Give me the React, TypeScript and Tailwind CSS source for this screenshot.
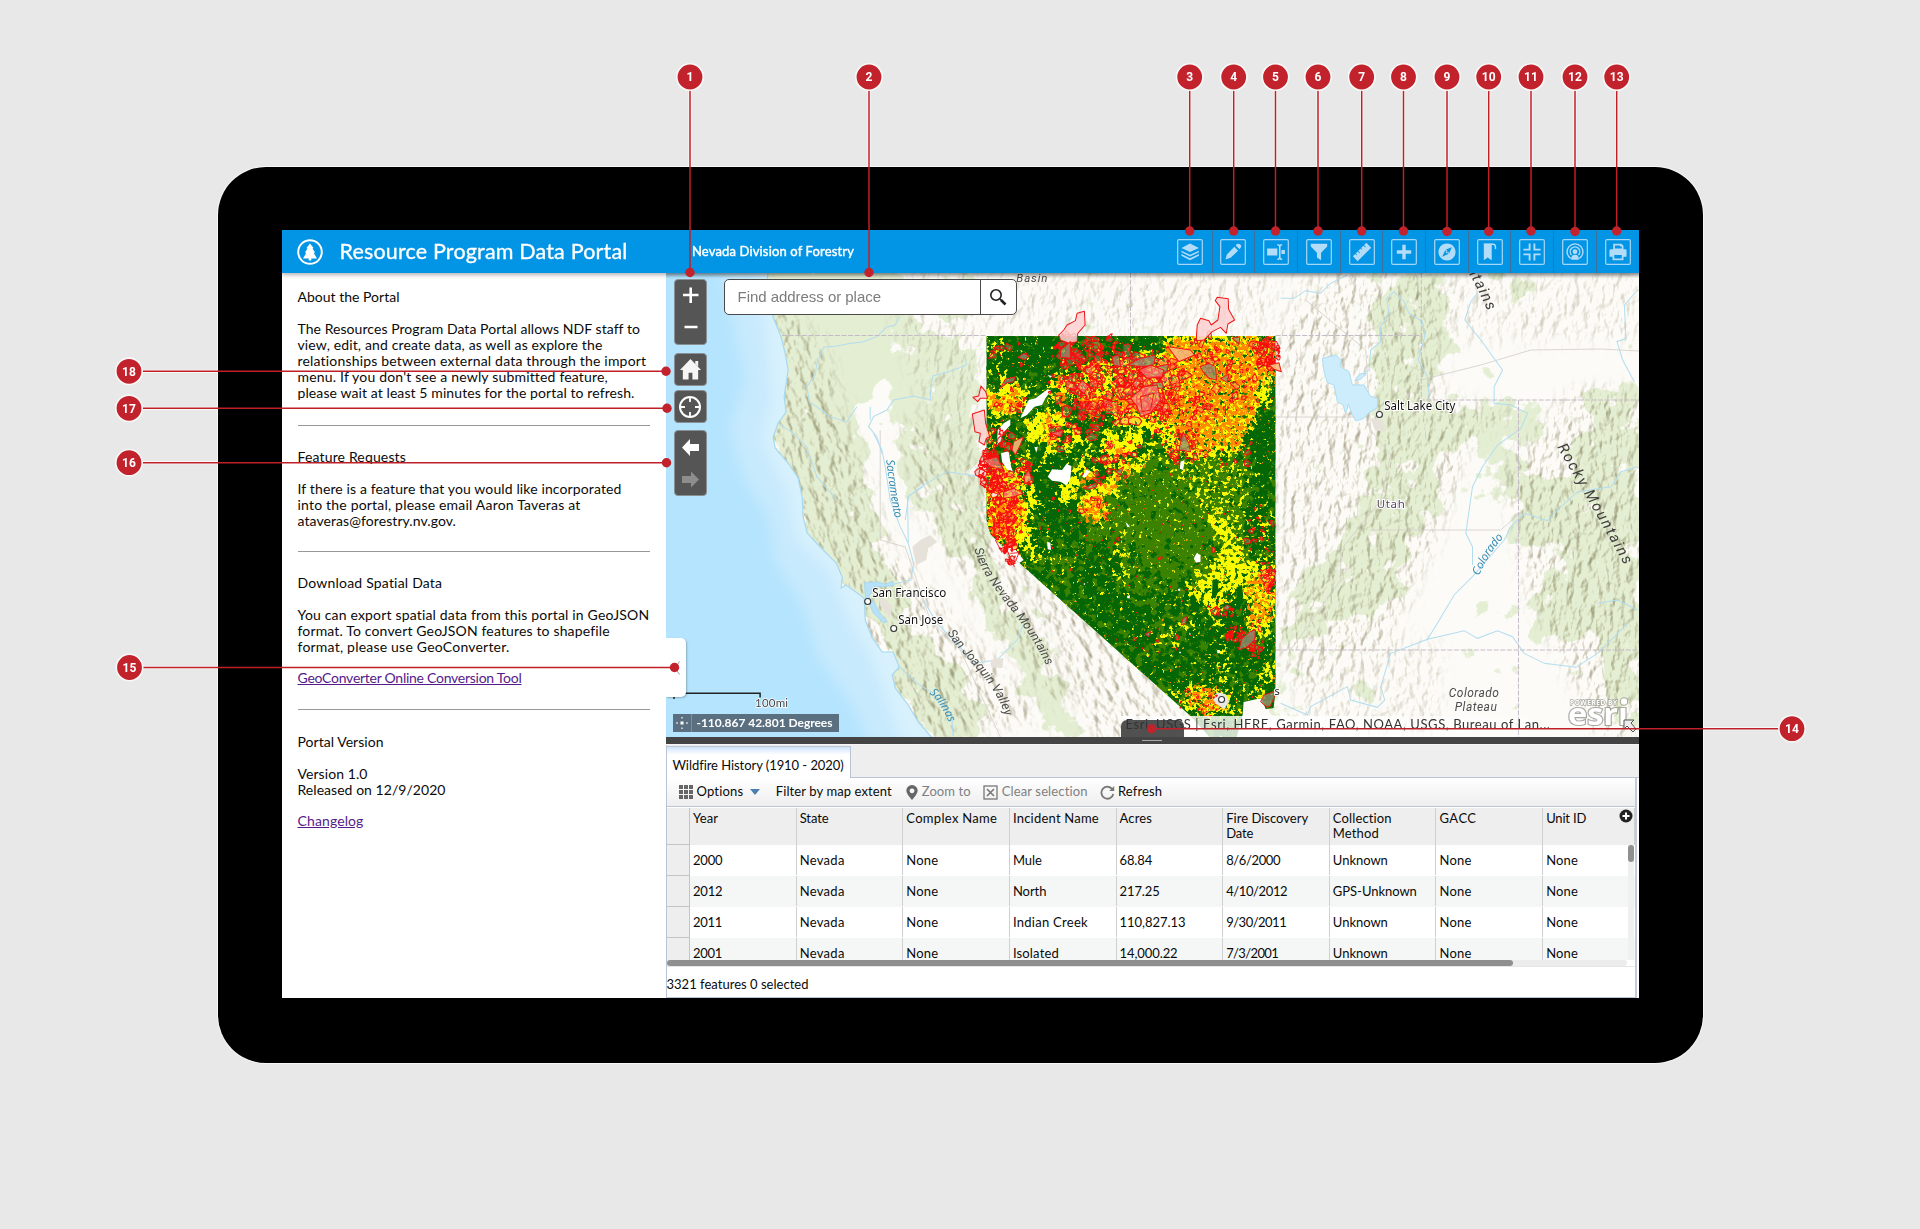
import React, { useLayoutEffect, useRef, useState } from 'react';

/* Inline text whose tracking is tuned so that it fills a given width. */
function Fit({ w, className = '', children }: { w: number; className?: string; children: string }) {
  const ref = useRef<HTMLSpanElement>(null);
  const [ls, setLs] = useState(0);
  useLayoutEffect(() => {
    if (ref.current) setLs((w - ref.current.getBoundingClientRect().width) / children.length);
  }, []);
  return (
    <span ref={ref} className={'inline-block whitespace-nowrap ' + className} style={{ letterSpacing: ls }}>
      {children}
    </span>
  );
}

function rng(seed: number) {
  let s = seed;
  return () => {
    s = (s * 1664525 + 1013904223) % 4294967296;
    return s / 4294967296;
  };
}

/* cx, cy, rx, ry, count, size */
const clusters = [
  [1105, 385, 58, 38, 90, 6],
  [1140, 400, 34, 28, 46, 9],
  [1150, 372, 34, 14, 26, 8],
  [1065, 350, 14, 18, 34, 6],
  [1100, 352, 22, 18, 34, 5],
  [1082, 385, 14, 30, 36, 5],
  [1085, 420, 20, 20, 30, 5],
  [1175, 420, 26, 36, 60, 5],
  [1210, 385, 30, 36, 34, 4],
  [1245, 385, 20, 26, 20, 4],
  [1265, 352, 14, 16, 46, 6],
  [1205, 350, 26, 16, 18, 5],
  [990, 470, 11, 22, 60, 6],
  [1003, 505, 16, 22, 56, 4],
  [1005, 535, 12, 17, 36, 4],
  [1010, 553, 6, 10, 14, 4],
  [1018, 475, 14, 16, 20, 5],
  [1000, 440, 14, 14, 20, 4],
  [1010, 400, 16, 14, 18, 3],
  [1105, 468, 14, 16, 16, 5],
  [1120, 450, 26, 12, 16, 3],
  [1060, 435, 14, 18, 16, 5],
  [1235, 455, 30, 14, 14, 3],
  [1190, 455, 20, 10, 18, 4],
  [1268, 575, 8, 16, 26, 4],
  [1235, 634, 8, 8, 16, 5],
  [1256, 640, 8, 22, 20, 4],
  [1222, 610, 16, 8, 12, 4],
  [1260, 540, 14, 40, 16, 3],
  [1080, 510, 30, 12, 10, 4],
  [1160, 645, 30, 12, 8, 3],
  [1200, 700, 26, 12, 14, 3],
  [1010, 355, 20, 14, 8, 4],
  [1130, 520, 130, 60, 24, 2],
];
const rand = rng(77);
const firePaths = clusters.map(([cx, cy, rx, ry, n, size]) => {
  let d = '';
  for (let i = 0; i < n; i++) {
    const a = rand() * 6.283;
    const r = Math.sqrt(rand());
    const x = cx + Math.cos(a) * r * rx;
    const y = cy + Math.sin(a) * r * ry;
    const s = size * (0.2 + rand() * rand() * 1.3);
    const k = 7 + Math.floor(rand() * 5);
    const stretch = 0.5 + rand() * 0.5;
    const tilt = rand() * 3.14;
    for (let j = 0; j < k; j++) {
      const t = (j / k) * 6.283;
      const q = s * (0.5 + rand() * 0.7);
      const px = Math.cos(t) * q;
      const py = Math.sin(t) * q * stretch;
      d +=
        (j ? 'L' : 'M') +
        (x + px * Math.cos(tilt) - py * Math.sin(tilt)).toFixed(1) +
        ' ' +
        (y + px * Math.sin(tilt) + py * Math.cos(tilt)).toFixed(1);
    }
    d += 'Z';
  }
  return d;
});

const NW = 'translate(960 270) scale(.33333)';
const SW = 'translate(960 500) scale(.33333)';
const EAST = 'translate(1280 270) scale(.33333)';
const COAST = 'translate(670 400) scale(.33333)';
const NCOAST = 'translate(660 220) scale(.33333)';

function Speckle({ id, seed, color, freq = 0.26 }: { id: string; seed: number; color: string; freq?: number }) {
  return (
    <filter id={id} x="950" y="300" width="360" height="450" filterUnits="userSpaceOnUse" colorInterpolationFilters="sRGB">
      <feTurbulence type="fractalNoise" baseFrequency="0.07" numOctaves="3" seed={seed + 9} result="w" />
      <feDisplacementMap in="SourceAlpha" in2="w" scale="34" xChannelSelector="R" yChannelSelector="G" />
      <feGaussianBlur stdDeviation="2" result="d" />
      <feTurbulence type="fractalNoise" baseFrequency={freq} numOctaves="3" seed={seed} />
      <feColorMatrix values="0 0 0 0 0  0 0 0 0 0  0 0 0 0 0  1 0 0 0 0" result="n" />
      <feComposite in="n" in2="d" operator="arithmetic" k1="0" k2="1" k3="0.6" k4="-0.3" />
      <feComponentTransfer result="m">
        <feFuncA type="linear" slope="11" intercept="-5" />
      </feComponentTransfer>
      <feFlood floodColor={color} />
      <feComposite in2="m" operator="in" />
    </filter>
  );
}

function MapCanvas() {
  return (
    <svg viewBox="666 273 972 464" className="absolute inset-0 h-full w-full" preserveAspectRatio="none">
      <defs>
        <Speckle id="midgreen" seed={3} color="#3a8200" freq={0.14} />
        <Speckle id="yellow" seed={12} color="#fafa00" />
        <Speckle id="orange" seed={25} color="#ff8c00" />
        <Speckle id="darkgreen" seed={38} color="#056605" freq={0.14} />
        <Speckle id="redpix" seed={51} color="#ff1a0a" />
        <filter id="veg" x="660" y="260" width="990" height="490" filterUnits="userSpaceOnUse" colorInterpolationFilters="sRGB">
          <feTurbulence type="fractalNoise" baseFrequency="0.05" numOctaves="5" seed="8" result="t" />
          <feDisplacementMap in="SourceAlpha" in2="t" scale="40" xChannelSelector="R" yChannelSelector="G" />
          <feGaussianBlur stdDeviation="4" result="d" />
          <feColorMatrix in="t" values="0 0 0 0 0  0 0 0 0 0  0 0 0 0 0  0 0 1 0 0" result="n" />
          <feComposite in="n" in2="d" operator="arithmetic" k2="1" k3="0.7" k4="-0.3" />
          <feComponentTransfer result="m">
            <feFuncA type="linear" slope="14" intercept="-6.5" />
          </feComponentTransfer>
          <feFlood floodColor="#e4eed3" />
          <feComposite in2="m" operator="in" />
        </filter>
        <filter id="relief" x="560" y="160" width="1200" height="700" filterUnits="userSpaceOnUse" colorInterpolationFilters="sRGB">
          <feTurbulence type="fractalNoise" baseFrequency="0.13 0.07" numOctaves="3" seed="5" />
          <feColorMatrix values="0 0 0 0 0  0 0 0 0 0  0 0 0 0 0  1 0 0 0 0" />
          <feDiffuseLighting surfaceScale="4.2" lightingColor="#ffffff" diffuseConstant="1.25">
            <feDistantLight azimuth="215" elevation="55" />
          </feDiffuseLighting>
          <feComponentTransfer result="l">
            <feFuncR type="linear" slope="0.38" intercept="0.635" />
            <feFuncG type="linear" slope="0.4" intercept="0.61" />
            <feFuncB type="linear" slope="0.48" intercept="0.52" />
          </feComponentTransfer>
          <feGaussianBlur in="SourceAlpha" stdDeviation="9" result="d" />
          <feComposite in="l" in2="d" operator="in" />
        </filter>
        <filter id="soft" x="-20%" y="-20%" width="140%" height="140%">
          <feGaussianBlur stdDeviation="7" />
        </filter>
        <clipPath id="state">
          <path d="M986 336H1275V690L1273 708L1265 709L1261 698L1243 702L1242 715L1236 737H1209L1190 716L1018 562L990 534L986 520Z" />
        </clipPath>
        <clipPath id="land">
          <path d="M768 273L766 290L773 317L781 337L785 353L788 370L784 397L786 412L778 423L773 437L775 448L788 463L798 478L802 497L803 517L807 533L820 547L836 563L842 577L841 588L846 585L864 598L865 620L872 638L882 652L893 652L899 667L892 675L895 688L908 705L918 722L932 738H1640V272Z" />
        </clipPath>
        <path id="p-rocky" d="M1556 447Q1592 508 1625 568" />
        <path id="p-sierra" d="M974 549C985 590 1022 612 1047 668" />
        <path id="p-joaquin" d="M947 633C963 658 996 682 1005 718" />
        <path id="p-sac" d="M886 460Q889 490 895 520" />
        <path id="p-salinas" d="M929 693Q941 703 949 724" />
        <path id="p-colo" d="M1478 576Q1488 553 1504 536" />
        <path id="p-tains" d="M1466 270Q1478 290 1488 314" />
      </defs>

      {/* ocean */}
      <rect x="666" y="273" width="972" height="464" fill="#b5e4fe" />
      <path filter="url(#soft)" d="M720 260L735 330L745 380L730 430L745 480L770 520L775 560L805 610L820 660L850 700L870 745H960V260Z" fill="#c8eafd" />
      <path filter="url(#soft)" d="M756 260L767 340L772 400L762 440L787 490L797 540L830 570L850 620L873 660L903 745H960V260Z" fill="#d8f1fd" />

      {/* land */}
      <g clipPath="url(#land)">
        <rect x="666" y="273" width="972" height="464" fill="#fcfbf7" />
        <g filter="url(#veg)">
          <path fillOpacity="0.95" d="M760 260H890L920 300L890 340L875 400L855 420L868 480L885 560L905 600L895 640L860 620L820 560L780 470Z" />
          <path fillOpacity="0.7" d="M880 330L960 340L975 400L985 520L1000 580L1050 640L1080 737H1050L1000 650L960 560L910 500L890 440Z" />
          <path fillOpacity="0.8" d="M885 600L930 640L970 690L985 737H930L890 680Z" />
          <path fillOpacity="0.7" d="M1375 273H1450V350L1430 400H1530L1550 440L1470 440L1430 460L1440 500L1400 560L1400 600L1350 620L1300 640L1290 590L1340 540L1370 460Z" />
          <path fillOpacity="0.75" d="M1600 380H1640V740H1620L1600 640L1530 640L1525 600L1570 560L1510 540L1520 480L1560 470Z" />
          <path fillOpacity="0.5" d="M1470 600L1500 590L1505 610L1475 615ZM1340 680L1370 660L1380 710L1360 700ZM1480 440L1540 440L1500 510L1475 520ZM1480 273H1530L1540 300L1520 300ZM1500 660L1530 737H1520Z" />
          <path fillOpacity="0.3" d="M900 273H985V520L950 450L900 330ZM1275 620L1300 600L1340 660L1300 737H1275Z" />
        </g>
        <g style={{ mixBlendMode: 'multiply' }}>
          <g filter="url(#relief)" transform="rotate(-24 900 520)">
            <path fillOpacity="1" d="M860 200L900 330L890 440L880 540L950 760L830 730L790 520L740 260ZM940 430L985 440L1000 560L1010 700L1000 770L960 740L920 520Z" />
          </g>
          <g filter="url(#relief)" transform="rotate(-30 1100 640)">
            <path fillOpacity="1" d="M1070 500L1110 500L1130 640L1130 800H1040L1050 640Z" />
          </g>
          <g filter="url(#relief)">
            <path fillOpacity="0.85" d="M1340 273H1440V400L1520 410L1470 440L1440 530L1390 640L1300 700L1275 640V336Z" />
            <path fillOpacity="0.9" d="M1570 390H1640V737H1600L1530 600L1500 470Z" />
            <path fillOpacity="0.5" d="M880 273H1275V336H985V540L920 400ZM1290 273H1350V340H1290ZM1440 273H1640V340H1440ZM1340 640H1440V737H1280Z" />
          </g>
        </g>
        <g fill="none" stroke="#d2cdc9" strokeWidth="0.8">
          <path d="M880 430V540L905 547L930 620L960 650L1000 737M1275 417H1360M1420 380L1480 365L1530 350L1600 349L1638 351M1305 300L1365 350L1370 430L1390 455L1380 500L1340 550L1340 580L1290 650M1370 530L1460 530L1500 530L1520 512" />
        </g>
        {/* rivers */}
        <g fill="none" stroke="#b2ddf0" strokeWidth="1">
          <path transform={NCOAST} strokeWidth="3" d="M718 290L705 315L680 320L650 350L610 365L560 372L530 378L490 382L470 430L465 465L440 500L448 545L510 590L560 605L590 560M915 405L918 435L880 450L850 460L818 468L812 500L810 540L760 528L700 540L680 570L640 590L625 620L650 650L665 700M355 610L400 640L440 680L470 770L530 840M960 770L860 755L790 795L745 830L735 900M630 600V560" />
          <path transform={COAST} strokeWidth="3" d="M610 100L635 150L645 200L660 300L690 380L714 430L712 290L760 260M714 430L730 490L722 540L660 555M760 600L800 670L860 730L910 790L980 780L1040 720L1060 670M688 800L740 850L790 880L845 950L848 1008M930 325L960 315" />
          <path transform={EAST} strokeWidth="3" d="M0 85L40 85L75 62L120 70L150 40L200 15M230 320L265 300L270 240L300 215L300 170L325 130L318 85L340 65L370 95L385 130L425 155L432 200L412 270L440 320L445 385M590 70L570 95L552 150L600 210L665 300L640 350L640 400L690 405L740 430L720 475L650 525L605 590L575 650L555 790L575 830V885M1070 60L1030 105L1035 205L1008 215L1025 270L1060 335M1070 590L1020 605L990 650L890 665L830 720L800 752L730 730L690 770L670 810L575 920L520 975L470 1060L440 1108L330 1150L300 1250L312 1290L290 1312L210 1290L200 1250L90 1310L80 1335L0 1300M440 1108L550 1082L590 1105L650 1082L695 1100L730 1150L790 1180L885 1192L950 1150L1000 1100L1040 1060M1070 1020L1010 990L950 1000" />
        </g>
        <g transform={EAST} fill="#cdedfd" stroke="#a4d8f0" strokeWidth="2.5">
          <path d="M125 265L165 255L182 270L178 290L205 305L215 345L250 345L268 378L290 385L290 413L262 430L250 445L225 453L213 430L203 402L195 432L187 405L170 395L160 345L140 338L130 305Z" />
          <path d="M222 332L238 312L256 310L240 328Z" />
        </g>
        <g transform={COAST} fill="#b6e1f8" stroke="#9dd2ec" strokeWidth="2">
          <path d="M583 548L620 545L645 552L668 545L672 556L640 560L612 560L606 575L595 590L612 608L630 640L652 665L640 668L610 640L596 610L585 590Z" />
        </g>
        <path fill="#e6e1d9" d="M912 547L920 540L930 535L937 542L928 548L926 560L916 565ZM1370 418L1382 420L1384 432L1374 430ZM990 660L1003 658L1002 668L991 667ZM878 594L892 606L890 618L880 606Z" />
      </g>
      <path d="M768 273L766 290L773 317L781 337L785 353L788 370L784 397L786 412L778 423L773 437L775 448L788 463L798 478L802 497L803 517L807 533L820 547L836 563L842 577L841 588L846 585L864 598L865 620L872 638L882 652L893 652L899 667L892 675L895 688L908 705L918 722L932 738" fill="none" stroke="#a5d9f2" strokeWidth="1.2" />
      <path d="M782 335.5H986M1275 335.5H1420M1130 273V336M1420.5 273V400H1638M1517.6 400V737M1275 650H1638" fill="none" stroke="#c5bac8" strokeWidth="1" strokeDasharray="5 1.6" />

      {/* cover raster */}
      <g clipPath="url(#state)">
        <rect x="950" y="300" width="350" height="440" fill="#056605" />
        <g filter="url(#midgreen)">
          <rect x="940" y="290" width="380" height="460" fillOpacity="0.38" />
          <path transform={NW} fillOpacity="0.5" d="M430 640L580 540L640 560H850L870 800L860 900L720 950L600 900L520 820L380 800Z" />
          <path transform={SW} fillOpacity="0.3" d="M480 60L740 20L700 220L560 320L480 260ZM180 180L300 150L380 220L300 230ZM560 380L760 380L740 540L600 500Z" />
        </g>
        <g filter="url(#darkgreen)">
          <path transform={NW} fillOpacity="0.72" d="M80 230L100 200H300L320 270L230 320L90 340ZM430 200H630L570 240L480 260ZM200 600L250 560L340 590L300 760L210 720ZM880 470L945 430V560L920 700L900 780H870ZM100 470L140 450L120 540Z" />
          <path transform={SW} fillOpacity="0.55" d="M340 250L470 170L480 340L600 290L560 420L480 420ZM600 180L680 150L650 220ZM780 340L860 360L830 480L780 560H620L560 500ZM870 80H940V180L880 170ZM900 400H945V560H890Z" />
        </g>
        <g filter="url(#yellow)">
          <rect x="940" y="290" width="380" height="460" fillOpacity="0.13" />
          <path transform={NW} fillOpacity="0.58" d="M630 190H945V300L905 430L860 480L835 555L620 560L600 440L440 390L330 400L350 290L480 280L600 240Z" />
          <path transform={NW} fillOpacity="0.72" d="M75 360L130 340L200 330L205 400L190 440L110 440L75 550ZM270 380L290 310L320 290L325 350L310 400ZM190 470L250 420L300 400L310 450L250 520L200 510ZM180 540L210 530L200 590L175 580ZM240 580L260 510L300 520L260 590ZM310 690L330 620L370 570L390 480L400 520L395 580L350 640L330 690ZM350 690L400 650L500 580L580 545L570 580L500 630L420 700L420 750L360 750ZM420 590L430 490L520 490L560 480L560 520L490 570ZM400 400L600 440L600 500L520 470L440 440ZM80 600H200L210 800H80ZM330 400L350 520L340 560L320 520Z" />
          <path transform={NW} fillOpacity="0.25" d="M100 200L130 190L120 300L80 330V200ZM600 560H860V760L760 780L660 640ZM890 690H930V900H890ZM470 740L500 720L480 950ZM780 700H860V900H770Z" />
          <path transform={SW} fillOpacity="0.58" d="M740 80L790 20L820 120L860 190L945 180V390L880 400L850 300L800 290L770 390L740 330L690 310L670 270L720 210L790 150ZM640 555L770 560L850 640L690 640ZM700 360L640 420L600 420L680 350Z" />
          <path transform={SW} fillOpacity="0.44" d="M80 0H230L210 100L280 190H190L90 110ZM480 150H500V250H480ZM780 420H800V540H770ZM840 560H910V600H860ZM910 470H945V540H910ZM240 160L280 160L290 200Z" />
        </g>
        <g filter="url(#orange)">
          <path transform={NW} fillOpacity="0.56" d="M640 200H945V300L900 400L830 550L700 540L640 480L600 400L620 300L590 260ZM80 360L200 340L190 430L90 440ZM280 310H320L310 400H280ZM260 420H310L260 560L250 520ZM320 690L380 580L390 640L340 690ZM360 680L420 660L500 590L570 560L500 640L430 690L415 750L370 750ZM440 540L490 520L480 570ZM340 350L600 400L580 440L350 430Z" />
          <path transform={NW} fillOpacity="0.38" d="M80 600H190L190 790H90Z" />
          <path transform={SW} fillOpacity="0.48" d="M860 220L940 230V380L860 370ZM650 570L760 560L830 630L720 640ZM100 0H170L150 150L100 90ZM760 500L790 500L780 550ZM790 280L820 290L810 320ZM910 500H940V530H910Z" />
        </g>
        <g filter="url(#redpix)">
          <path transform={NW} fillOpacity="0.28" d="M350 240L640 230L660 400L620 500L540 440L350 400ZM80 560H190L200 800H80ZM620 400L760 330L740 420L660 540Z" />
          <path transform={SW} fillOpacity="0.26" d="M100 0H180L150 160L100 90ZM800 370L870 370L880 450L820 420ZM910 190L950 200V280L910 290ZM660 580L830 590L820 630L720 640Z" />
        </g>
        <g fill="#056605">
          <path transform={SW} d="M756 240L770 236L774 270L764 296L754 290ZM828 262L844 254L848 290L836 333L826 320ZM688 290L700 282L708 300L704 322L690 318Z" />
        </g>
        <g fill="#fff">
          <g transform={NW}>
            <path d="M180 445L205 390L225 385L262 358L272 362L255 385L245 405L222 410L200 435ZM110 525L112 480L130 460L150 448L150 465L128 490L120 515ZM122 550L145 543L152 590L158 605L140 598L125 575ZM262 620L275 598L305 600L318 582L333 588L330 625L318 645L300 635L275 632ZM660 575L672 570L668 600L658 596ZM365 620L378 600L390 603L376 622ZM92 670L120 668L118 675L95 680ZM262 315L275 318L270 323ZM222 532L232 530L228 548ZM500 760L508 772L500 770Z" />
          </g>
          <g transform={SW}>
            <path d="M700 175L708 160L720 165L720 185L706 188ZM260 125L270 128L272 150L262 148ZM120 140L150 130L190 180L160 200L130 165ZM495 65L508 80L500 80ZM500 287H508V295H500ZM652 266H659V272H652ZM770 450H778V460H770ZM656 455H661V460H656ZM686 400H690V404H686ZM370 250H374V254H370Z" />
            <path fill="#e9e5e0" d="M756 596L770 577L795 582L806 605L790 628L765 610Z" />
          </g>
        </g>
      </g>

      {/* burn perimeters */}
      <g fill="#f59a92" fillOpacity="0.32" stroke="#f80c0c" strokeWidth="1" strokeLinejoin="round">
        {firePaths.map((d, i) => (
          <path key={i} d={d} />
        ))}
      </g>
      <g transform={NW} stroke="#f21414" strokeWidth="3" strokeLinejoin="round">
        <g fill="#fbd0d0" fillOpacity="0.85">
          <path d="M295 195L310 180L320 165L345 152L350 130L372 124L374 165L352 190L350 215L325 220L300 210Z" />
          <path d="M708 195L710 165L720 145L745 152L752 165L772 150L778 110L764 92L770 82L803 86L804 118L822 150L802 162L797 190L780 172L755 185L730 210L708 212Z" />
          <path d="M36 432L72 420L76 460L88 500L78 505L72 525L56 515L60 490L44 485Z" />
          <path d="M38 382L55 378L62 348L76 365L82 385L60 385L52 395Z" />
        </g>
        <g fill="#8f8f70" fillOpacity="0.75">
          <path d="M172 262L190 250L205 258L195 270ZM120 355L135 328L165 320L160 335L140 338ZM500 285L540 265L585 255L580 285L545 290ZM718 290L745 280L765 290L768 330L745 325L728 305ZM300 240L330 215L330 265L300 262ZM455 260L475 255L480 290L460 285ZM590 290L625 282L620 305L598 310ZM655 540L668 485L685 520L690 545ZM815 205L838 200L835 222ZM780 325L805 312L800 338ZM465 605L490 590L480 615ZM370 655L405 640L410 650L385 658ZM575 340L605 335L610 355L580 355Z" />
        </g>
        <g fill="#f7b778" fillOpacity="0.9">
          <path d="M622 230L690 240L702 255L655 275L640 255ZM155 540L160 515L190 500L180 525L165 555ZM925 285L955 278L962 305L940 298Z" />
        </g>
        <g fill="#f58b8b" fillOpacity="0.6">
          <path d="M535 300L570 285L610 300L605 320L560 325ZM510 385L550 350L590 345L600 390L570 430L540 440L530 410ZM365 330L385 350L370 370L350 352ZM540 380L580 370L570 420L545 425ZM70 570L110 560L130 600L90 590ZM130 665L160 655L190 670L160 680L130 685ZM270 490L310 480L300 500ZM190 620L205 600L215 630L195 640Z" />
        </g>
      </g>
      <g transform={SW} stroke="#f21414" strokeWidth="2.8" fill="#8f8f70" fillOpacity="0.8" strokeLinejoin="round">
        <path d="M834 450L845 415L868 395L885 390L882 420L860 440ZM900 605L910 585L940 575L944 585L928 620L914 618ZM788 325L798 315L810 320L800 330ZM662 375L668 355L680 350L675 370ZM553 402L570 395L565 410Z" />
        <path fill="none" d="M140 150L155 185L162 200M150 160L176 158L165 185L155 180M105 120L125 158" />
      </g>

      {/* labels */}
      <g fill="#4c4c4c" fontFamily="'Roboto', 'Noto Sans', sans-serif" fontStyle="italic" fontSize="12">
        <text x="1016" y="282.5" fontSize="11.5" textLength="31">Basin</text>
        <text x="1448" y="697" textLength="50">Colorado</text>
        <text x="1454" y="711" textLength="42">Plateau</text>
        <text fontSize="15" fill="#3d3d3d"><textPath href="#p-rocky" textLength="136">Rocky Mountains</textPath></text>
        <text fontSize="12.5"><textPath href="#p-sierra" textLength="138">Sierra Nevada Mountains</textPath></text>
        <text fontSize="12.5"><textPath href="#p-joaquin" textLength="102">San Joaquin Valley</textPath></text>
        <text fontSize="15" fill="#3d3d3d"><textPath href="#p-tains" textLength="46">ntains</textPath></text>
      </g>
      <g fill="#3b8fb5" fontFamily="'Noto Sans', sans-serif" fontStyle="italic" fontSize="11.5">
        <text><textPath href="#p-sac" textLength="59">Sacramento</textPath></text>
        <text><textPath href="#p-salinas" textLength="36">Salinas</textPath></text>
        <text><textPath href="#p-colo" textLength="46">Colorado</textPath></text>
      </g>
      <g fill="#111" stroke="#fff" strokeWidth="2" paintOrder="stroke" fontFamily="'Noto Sans', sans-serif" fontSize="12">
        <text x="872" y="597.500" textLength="74" lengthAdjust="spacingAndGlyphs">San Francisco</text>
        <text x="898" y="624.500" textLength="45" lengthAdjust="spacingAndGlyphs">San Jose</text>
        <text x="1383.500" y="410.500" textLength="71" lengthAdjust="spacingAndGlyphs">Salt Lake City</text>
        <text x="1376" y="508.500" fill="#5a4562" fontSize="11.5" textLength="28">Utah</text>
        <text x="1274" y="695" fontSize="11">s</text>
      </g>
      <g fill="#fff" stroke="#333" strokeWidth="1.1">
        <circle cx="867.5" cy="601.5" r="3" />
        <circle cx="893.5" cy="628.5" r="3" />
        <circle cx="1378.700" cy="414.500" r="3" />
        <circle cx="1221" cy="699.500" r="3" />
      </g>
      <path d="M674 699V693.300H760V697.500" fill="none" stroke="#222" strokeWidth="1.500" />
      <text x="755" y="707.500" fill="#444" stroke="#fff" strokeWidth="1.500" paintOrder="stroke" fontFamily="Lato, sans-serif" fontSize="11.500" textLength="33">100mi</text>
    </svg>
  );
}

const tools: React.ReactNode[] = [
  <g><path d="M38 13L64 26L38 38L13 26Z" /><path d="M13 34L38 46L64 34V39L38 51L13 39ZM13 44L38 56L64 44V49L38 62L13 49Z" /></g>,
  <g><path d="M16 60L20 45L42 23L53 34L31 55ZM46 19L50 14Q58 12 62 19Q63 24 57 30Z" /></g>,
  <g><path d="M12 28H42V48H12ZM54 32H64V44H54Z" /><path d="M42 17Q49 17 49 23V53Q49 59 42 59M56 17Q49 17 49 23M56 59Q49 59 49 53" fill="none" stroke="currentColor" strokeWidth="4.500" /></g>,
  <path d="M14 14H62V22L44 40V62L32 54V40L14 22Z" />,
  <g transform="rotate(-45 38 38)"><path fillRule="evenodd" d="M10 28H66V48H10ZM20 28V33H22.500V28ZM30 28V35H32.500V28ZM42 28V33H44.500V28ZM54 28V35H56.500V28Z" /></g>,
  <path d="M33 17H43V33H59V43H43V59H33V43H17V33H33Z" />,
  <path fillRule="evenodd" d="M38 13A25 25 0 1 0 38.010 13ZM24 52L33 33L43 43ZM52 24L35 31L45 41ZM38 36A3 3 0 1 1 37.900 36Z" />,
  <g><path d="M20 14H43V62L31 54L20 62Z" /><path d="M20 15.500H48Q54 16 54 24V29" fill="none" stroke="currentColor" strokeWidth="4" /></g>,
  <path d="M13 31H31V13M45 13V31H63M63 45H45V63M31 63V45H13" fill="none" stroke="currentColor" strokeWidth="5.500" />,
  <g><circle cx="38" cy="37" r="7" /><path d="M27 61Q26 46 38 46Q50 46 49 61Z" /><path d="M26 57A23 23 0 1 1 50 57M28 47A14 14 0 1 1 48 47" fill="none" stroke="currentColor" strokeWidth="4" /></g>,
  <path fillRule="evenodd" d="M24 14H48L54 20V30H60Q63 30 63 34V52H54V62H22V52H13V34Q13 30 17 30H24ZM27 47V57H49V47ZM29 19V28H49V22H44V19Z" />,
];

function Hr({ className }: { className: string }) {
  return <div className={'h-px w-[352px] bg-[#989898] ' + className} />;
}

function Sidebar() {
  return (
    <aside className="h-full w-[384px] shrink-0 bg-white pl-4 pt-4 text-[14px] leading-4 text-[#0a0a0a]">
      <p><Fit w={102}>About the Portal</Fit></p>
      <div className="mt-4 flex flex-col items-start">
        <Fit w={342}>The Resources Program Data Portal allows NDF staff to</Fit>
        <Fit w={305}>view, edit, and create data, as well as explore the</Fit>
        <Fit w={349}>relationships between external data through the import</Fit>
        <Fit w={310}>{"menu. If you don't see a newly submitted feature,"}</Fit>
        <Fit w={337}>please wait at least 5 minutes for the portal to refresh.</Fit>
      </div>
      <Hr className="mt-6" />
      <p className="mt-[23px]"><Fit w={108.500}>Feature Requests</Fit></p>
      <div className="mt-4 flex flex-col items-start">
        <Fit w={324}>If there is a feature that you would like incorporated</Fit>
        <Fit w={283}>into the portal, please email Aaron Taveras at</Fit>
        <Fit w={158.500}>ataveras@forestry.nv.gov.</Fit>
      </div>
      <Hr className="mt-[22px]" />
      <p className="mt-[23px]"><Fit w={145}>Download Spatial Data</Fit></p>
      <div className="mt-4 flex flex-col items-start">
        <Fit w={352}>You can export spatial data from this portal in GeoJSON</Fit>
        <Fit w={312}>format. To convert GeoJSON features to shapefile</Fit>
        <Fit w={212}>format, please use GeoConverter.</Fit>
      </div>
      <a className="mt-[15px] block h-4 text-[#551a8b]"><Fit w={224} className="underline">GeoConverter Online Conversion Tool</Fit></a>
      <Hr className="mt-[23px]" />
      <p className="mt-6"><Fit w={86}>Portal Version</Fit></p>
      <div className="mt-4 flex flex-col items-start">
        <Fit w={70}>Version 1.0</Fit>
        <Fit w={148}>Released on 12/9/2020</Fit>
      </div>
      <a className="mt-[15px] block h-4 text-[#551a8b]"><Fit w={66} className="underline">Changelog</Fit></a>
    </aside>
  );
}

const ctl = 'flex w-[33px] flex-col items-center rounded-[4px] border border-[#8a8f92] bg-[#555] text-white';

function MapView() {
  return (
    <div className="relative h-[464px] w-full overflow-hidden">
      <MapCanvas />
      <div className="absolute left-[8px] top-[6px] flex items-start gap-[17px]">
        <div className="flex flex-col">
          <div className={ctl + ' h-[66px]'}>
            <svg viewBox="0 0 33 64" className="h-16 w-[33px]" stroke="currentColor" strokeWidth="2.600"><path d="M9 15H24.500M16.700 7.500V23M10.500 47H23.500" /></svg>
          </div>
          <div className={ctl + ' mt-[8px] h-[33px] justify-center'}>
            <svg viewBox="0 0 24 24" className="h-[23px] w-[23px]" fill="#f5f5f5"><path d="M12 1L23 12.500H20V22.500H14V15.500H10V22.500H4V12.500H1ZM17 3H20V9L17 6Z" /></svg>
          </div>
          <div className={ctl + ' mt-[4px] h-[33px] justify-center'}>
            <svg viewBox="0 0 24 24" className="h-6 w-6" fill="none" stroke="#fff"><circle cx="12" cy="12" r="10" strokeWidth="2" /><path strokeWidth="1.800" d="M12 2V7M12 17V22M2 12H7M17 12H22" /></svg>
          </div>
          <div className={ctl + ' mt-[7px] h-[66px]'}>
            <svg viewBox="0 0 33 64" className="h-16 w-[33px]"><path fill="#fff" d="M8 16.500L16 8V13H25V20H16V25Z" /><path fill="#8d8d8d" d="M25 48.500L17 40.500V45H8V52H17V56.500Z" /></svg>
          </div>
        </div>
        <div className="flex h-[36px] w-[293px] overflow-hidden rounded-[5px] border border-[#4a4a4a] bg-white">
          <div className="flex w-[256px] items-center border-r border-[#4a4a4a] pl-[13px] font-['Liberation_Sans',sans-serif] text-[15px] text-[#7c7c7c]">
            <Fit w={143.500}>Find address or place</Fit>
          </div>
          <div className="flex flex-1 items-center justify-center">
            <svg viewBox="0 0 18 18" className="h-[18px] w-[18px]" fill="none" stroke="#222"><circle cx="7" cy="7" r="5.200" strokeWidth="1.600" /><path d="M10.800 10.800L12.500 12.500" strokeWidth="1.500" /><path d="M12 12L16.500 16.500" strokeWidth="2.600" /></svg>
          </div>
        </div>
      </div>
      <div className="absolute left-0 top-[365px] flex h-[59px] w-[20px] items-center justify-end rounded-r-[5px] bg-white pr-1.5 shadow-[1px_1px_2px_rgba(0,0,0,.25)]">
        <svg viewBox="0 0 6 14" className="h-3.5 w-1.5" fill="none" stroke="#999"><path d="M5.500 .5L1 7L5.500 13.500" /></svg>
      </div>
      <div className="absolute left-[7px] top-[441px] flex h-[18px] w-[166px] items-center bg-[#5a7080] text-white">
        <svg viewBox="0 0 18 18" className="h-[18px] w-[18px]" fill="#fff"><path d="M7.500 7.500H10.500V10.500H7.500ZM8.400 3H9.600V4.500H8.400ZM8.400 13.500H9.600V15H8.400ZM3 8.400H5V9.600H3ZM13 8.400H15V9.600H13Z" /></svg>
        <span className="flex h-full items-center border-l border-[#7d8f9c] pl-[5px] text-[12px] font-bold"><Fit w={136}>-110.867 42.801 Degrees</Fit></span>
      </div>
      <div className="absolute bottom-0 left-[455px] flex h-[21px] w-[440px] items-start overflow-hidden bg-gradient-to-r from-white/80 via-white/80 to-white/10 pl-[5px] text-[13px] leading-[16px] text-[#333]">
        <Fit w={425}>Esri, USGS | Esri, HERE, Garmin, FAO, NOAA, USGS, Bureau of Lan...</Fit>
      </div>
      <svg viewBox="0 0 72 42" className="absolute bottom-0 right-0 h-[42px] w-[72px]" fontFamily="'Open Sans', sans-serif">
        <g fill="#fff" stroke="#8f8f8a" strokeWidth="2.200" strokeOpacity="0.75" paintOrder="stroke">
          <text x="3" y="10" fontSize="6.500" fontWeight="700" textLength="47" strokeWidth="1.400">POWERED BY</text>
          <text x="1" y="30" fontSize="30" fontWeight="700" textLength="60" lengthAdjust="spacingAndGlyphs">esrı</text>
          <circle cx="57" cy="6.500" r="3.200" />
        </g>
        <path d="M57 25H67L64 28L69 34L66 37L60 31L57 34Z" fill="#eee" stroke="#555" />
      </svg>
      <div className="absolute bottom-0 left-[455px] h-[17px] w-[63px] rounded-t-[6px] bg-[#333]/85" />
      <div className="absolute inset-x-0 top-0 h-[5px] bg-gradient-to-b from-black/25 to-transparent" />
    </div>
  );
}

const heads: [string, number, string?, number?][] = [
  ['Year', 25], ['State', 29], ['Complex Name', 91], ['Incident Name', 86], ['Acres', 32.500],
  ['Fire Discovery', 82, 'Date', 27], ['Collection', 59, 'Method', 46], ['GACC', 37], ['Unit ID', 40],
];
const rows: [string, number][][] = [
  [['2000', 29.500], ['Nevada', 45], ['None', 32], ['Mule', 29], ['68.84', 32.500], ['8/6/2000', 54], ['Unknown', 55], ['None', 32], ['None', 32]],
  [['2012', 29.500], ['Nevada', 45], ['None', 32], ['North', 33.500], ['217.25', 40], ['4/10/2012', 61], ['GPS-Unknown', 84], ['None', 32], ['None', 32]],
  [['2011', 29], ['Nevada', 45], ['None', 32], ['Indian Creek', 75], ['110,827.13', 66], ['9/30/2011', 60], ['Unknown', 55], ['None', 32], ['None', 32]],
  [['2001', 29], ['Nevada', 45], ['None', 32], ['Isolated', 46], ['14,000.22', 58], ['7/3/2001', 52], ['Unknown', 55], ['None', 32], ['None', 32]],
];
const gridCols = 'grid grid-cols-[23.500px_repeat(8,106.650px)_1fr]';

function AttributeTable() {
  return (
    <section className="flex flex-1 flex-col overflow-hidden border-l border-[#b9c4d4] bg-white text-[13px] text-[#0a0a0a]">
      <div className="flex h-[33px] shrink-0 items-end border-b border-[#b9c4d4] bg-[#eee]">
        <div className="-mb-px flex h-[32px] w-[184.500px] items-center border-r border-t border-[#b9c4d4] bg-gradient-to-b from-[#cfe4fb] from-0% via-white via-25% to-white pl-[6px] pt-[6px]">
          <Fit w={171}>Wildfire History (1910 - 2020)</Fit>
        </div>
      </div>
      <div className="mr-[2px] flex flex-1 flex-col border-r-2 border-[#c3ccda]">
        <div className="flex h-[29px] shrink-0 items-center border-b border-[#b9c4d4] bg-gradient-to-b from-white to-[#eee] pl-[12px]">
          <svg viewBox="0 0 14 14" className="mr-1 h-3.5 w-3.5" fill="#666"><path d="M0 0H4V4H0ZM5 0H9V4H5ZM10 0H14V4H10ZM0 5H4V9H0ZM5 5H9V9H5ZM10 5H14V9H10ZM0 10H4V14H0ZM5 10H9V14H5ZM10 10H14V14H10Z" /></svg>
          <Fit w={47}>Options</Fit>
          <svg viewBox="0 0 10 6" className="ml-[7px] h-1.5 w-2.5" fill="#4b7fae"><path d="M0 0H10L5 6Z" /></svg>
          <Fit w={116} className="ml-[15.500px]">Filter by map extent</Fit>
          <svg viewBox="0 0 12 15" className="ml-[14px] h-[15px] w-3" fill="#666"><path fillRule="evenodd" d="M6 0A5.700 5.700 0 0 1 11.700 5.800Q11.500 9 6 15Q.5 9 .3 5.800A5.700 5.700 0 0 1 6 0ZM6 3.400A2.400 2.400 0 1 0 6.010 3.400Z" /></svg>
          <Fit w={49} className="ml-1 text-[#808080]">Zoom to</Fit>
          <svg viewBox="0 0 15 15" className="ml-3 h-[15px] w-[15px]" fill="none" stroke="#777"><rect x="1" y="1" width="13" height="13" strokeWidth="1.300" /><path d="M4 4L11 11M11 4L4 11" strokeWidth="1.600" /></svg>
          <Fit w={86} className="ml-1 text-[#808080]">Clear selection</Fit>
          <svg viewBox="0 0 15 15" className="ml-[12.500px] h-[15px] w-[15px]" fill="none" stroke="#777" strokeWidth="1.800"><path d="M12.500 4.500A6 6 0 1 0 13.300 9" /><path d="M14.200 1V6H9.200Z" fill="#777" stroke="none" /></svg>
          <Fit w={44} className="ml-[3px]">Refresh</Fit>
        </div>
        <div className={gridCols + ' relative mt-px h-[37px] shrink-0 bg-[#eee] leading-[15px]'}>
          <div className="border-b border-r border-[#c4c4c4]" />
          {heads.map(([a, aw, b, bw], i) => (
            <div key={i} className="flex flex-col items-start border-r border-[#cfcfcf] pl-[3px] pt-[2.500px] last:border-r-0">
              <Fit w={aw}>{a}</Fit>
              {b && <Fit w={bw!}>{b}</Fit>}
            </div>
          ))}
          <svg viewBox="0 0 14 14" className="absolute right-[2px] top-[1px] h-3.5 w-3.5"><circle cx="7" cy="7" r="6.500" fill="#222" /><path d="M7 3.500V10.500M3.500 7H10.500" stroke="#fff" strokeWidth="2" /></svg>
        </div>
        <div className="relative h-[115px] shrink-0 overflow-hidden">
          {rows.map((r, i) => (
            <div key={i} className={gridCols + ' h-[31px] ' + (i % 2 ? 'bg-[#f5f7f7]' : 'bg-white')}>
              <div className="border-b border-r border-[#c4c4c4] bg-[#eee]" />
              {r.map(([t, w], j) => (
                <div key={j} className="mb-px flex items-center border-r border-[#cfcfcf] pl-[3px] pt-px last:border-r-0">
                  <Fit w={w}>{t}</Fit>
                </div>
              ))}
            </div>
          ))}
          <div className="absolute inset-y-0 right-px w-[6px] bg-[#f0f0f0]">
            <div className="h-[17px] rounded-full bg-[#909090]" />
          </div>
        </div>
        <div className="h-[7px] shrink-0 border-b border-[#e6e6e6]">
          <div className="mr-2 h-[6px] rounded-r-full bg-[#ececec]">
            <div className="h-[6px] w-[846px] rounded-full bg-[#8f8f8f]" />
          </div>
        </div>
        <div className="flex flex-1 items-center border-b border-[#b9c4d4] pt-1.5"><Fit w={142}>3321 features 0 selected</Fit></div>
      </div>
    </section>
  );
}

const top: [number, number, string][] = [
  [690, 272.500, '1'], [869, 272.500, '2'], [1189.700, 231, '3'], [1233.700, 231, '4'], [1275.500, 231, '5'], [1318, 231, '6'],
  [1361.700, 231, '7'], [1403.500, 231, '8'], [1447, 231.500, '9'], [1488.700, 231.500, '10'], [1531, 231, '11'], [1575, 231.500, '12'], [1616.700, 231, '13'],
];
const side: [number, number, number, string][] = [
  [129, 371.300, 666, '18'], [129, 408.300, 667, '17'], [129, 462.700, 666.500, '16'], [129.500, 667.500, 674.500, '15'], [1792, 728.700, 1151.500, '14'],
];

function Callouts() {
  const all = [
    ...top.map(([x, y2, n]) => ({ x, y: 77, x2: x, y2, n })),
    ...side.map(([x, y, x2, n]) => ({ x, y, x2, y2: y, n })),
  ];
  return (
    <svg viewBox="0 0 1920 1229" className="pointer-events-none absolute left-0 top-0 z-20 h-[1229px] w-[1920px]" fontFamily="Roboto, 'Noto Sans', sans-serif">
      {all.map(({ x, y, x2, y2, n }) => {
        const vertical = x === x2;
        const edge = x > 1700 ? 1703 : 217;
        return (
          <g key={n}>
            <line x1={x} y1={y} x2={vertical ? x : edge} y2={vertical ? 166 : y} stroke="#f8f8f8" strokeWidth="3.200" />
            <line x1={x} y1={y} x2={x2} y2={y2} stroke="#bf2028" strokeWidth="1.500" />
            <circle cx={x2} cy={y2} r="4.700" fill="#c2222b" />
            <circle cx={x} cy={y} r="13.200" fill="#c2222b" stroke="#f8f8f8" strokeWidth="1.600" />
            <text x={x} y={y + 4.200} textAnchor="middle" fontSize="12" fontWeight="700" fill="#fff">{n}</text>
          </g>
        );
      })}
    </svg>
  );
}

export default function App() {
  return (
    <main className="relative flex h-[1229px] w-[1920px] items-start bg-[#e8e8e8] pl-[217.500px] pt-[166.500px] font-['Lato',sans-serif]">
      <div className="h-[896px] w-[1485px] rounded-[48px] bg-black pl-[64px] pt-[63.500px] shadow-[0_0_0_1px_#f7f7f7]">
        <div className="flex h-[768px] w-[1357px] flex-col bg-white">
          <header className="z-10 flex h-[43px] shrink-0 items-center bg-[#0395e5] pl-[15.500px] text-white shadow-[0_2px_4px_rgba(0,0,0,.3)]">
            <svg viewBox="0 0 26 26" className="h-[26px] w-[26px]"><circle cx="13" cy="13" r="11.800" fill="none" stroke="#fff" strokeWidth="2" /><path fill="#fff" d="M13 4.500L16.500 9L15.500 9.500L18 13.500L16.800 14L20 19.500H14.300V21.500H11.700V19.500H6L9.200 14L8 13.500L10.500 9.500L9.500 9Z" /></svg>
            <Fit w={288} className="ml-[16.500px] text-[21.500px] [-webkit-text-stroke:0.3px_white]">Resource Program Data Portal</Fit>
            <Fit w={162} className="ml-[64.500px] pt-px text-[13px] [-webkit-text-stroke:0.4px_white]">Nevada Division of Forestry</Fit>
            <div className="ml-auto flex h-full">
              {tools.map((icon, i) => (
                <div key={i} className="flex h-full w-[42.700px] items-center justify-center border-l border-[#3a709b] first:border-l-0">
                  <svg viewBox="0 0 76 76" className="h-[26px] w-[26px] fill-current text-[#b3dcf8]">
                    <rect x="2" y="2" width="72" height="72" rx="4" fill="none" stroke="#a5d6f6" strokeWidth="3.500" />
                    {icon}
                  </svg>
                </div>
              ))}
            </div>
          </header>
          <div className="flex min-h-0 flex-1">
            <Sidebar />
            <div className="flex min-w-0 flex-1 flex-col">
              <MapView />
              <div className="flex h-[8px] shrink-0 items-center border-b border-[#f5f5f5] bg-[#444] pl-[476px]">
                <div className="h-[1.500px] w-[20px] bg-[#aaa]" />
              </div>
              <AttributeTable />
            </div>
          </div>
        </div>
      </div>
      <Callouts />
    </main>
  );
}
